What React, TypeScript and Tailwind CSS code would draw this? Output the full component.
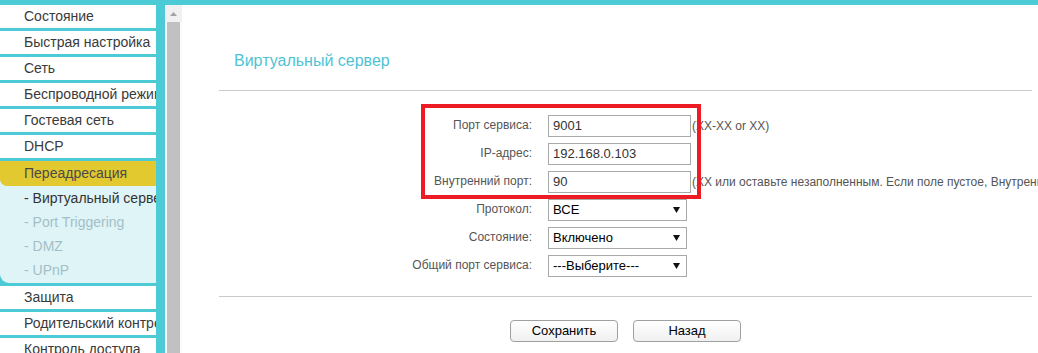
import React from "react";

const menuTop = ["Состояние", "Быстрая настройка", "Сеть", "Беспроводной режим", "Гостевая сеть", "DHCP"];
const subMenu = [
  { label: "- Виртуальный сервер", active: true },
  { label: "- Port Triggering", active: false },
  { label: "- DMZ", active: false },
  { label: "- UPnP", active: false },
];
const menuBottom = ["Защита", "Родительский контроль", "Контроль доступа"];

function Arrow() {
  return (
    <svg width="7" height="6" viewBox="0 0 7 6" className="shrink-0">
      <path d="M0 0 H7 L3.5 6 Z" fill="#111" />
    </svg>
  );
}

function Select({ value }: { value: string }) {
  return (
    <div className="w-[139px] h-[22px] border border-[#a9a9a9] bg-white flex items-center justify-between pl-[4px] pr-[6px] text-[13px] text-black">
      <span>{value}</span>
      <Arrow />
    </div>
  );
}

function Input({ value }: { value: string }) {
  return (
    <div className="w-[143px] h-[22px] border border-[#a9a9a9] bg-white flex items-center pl-[4px] text-[13px] text-[#333]">
      {value}
    </div>
  );
}

export default function App() {
  const rows = [
    { label: "Порт сервиса:", field: <Input value="9001" />, hint: "(XX-XX or XX)" },
    { label: "IP-адрес:", field: <Input value="192.168.0.103" />, hint: "" },
    {
      label: "Внутренний порт:",
      field: <Input value="90" />,
      hint: "(XX или оставьте незаполненным. Если поле пустое, Внутренний порт будет таким же, как Порт сервиса.)",
    },
    { label: "Протокол:", field: <Select value="ВСЕ" />, hint: "" },
    { label: "Состояние:", field: <Select value="Включено" />, hint: "" },
    { label: "Общий порт сервиса:", field: <Select value="---Выберите---" />, hint: "" },
  ];

  return (
    <div className="relative w-[1038px] h-[353px] overflow-hidden bg-white font-['Liberation_Sans',Arial,sans-serif]">
      {/* top bar */}
      <div className="h-[5px] bg-[#4ccbd6]" />

      <div className="flex h-[348px]">
        {/* sidebar menu */}
        <div className="w-[165px] shrink-0 bg-[#4ccbd6] pr-[9px] text-[14px] text-[#3a3a3a]">
          {menuTop.map((m) => (
            <div key={m} className="h-[23px] mb-[3px] bg-white pl-[24px] flex items-center whitespace-nowrap overflow-hidden">
              {m}
            </div>
          ))}
          <div className="bg-[#dff4f7] rounded-bl-[9px] mb-[3px] overflow-hidden">
            <div className="h-[25px] bg-[#e2c930] rounded-bl-[7px] pl-[24px] flex items-center text-[#4a4a4a]">
              Переадресация
            </div>
            <div className="pb-[1px]">
              {subMenu.map((s) => (
                <div
                  key={s.label}
                  className={`h-[24px] pl-[24px] flex items-center whitespace-nowrap overflow-hidden ${
                    s.active ? "text-[#333]" : "text-[#a3bfc5]"
                  }`}
                >
                  {s.label}
                </div>
              ))}
            </div>
          </div>
          {menuBottom.map((m) => (
            <div key={m} className="h-[23px] mb-[3px] bg-white pl-[24px] flex items-center whitespace-nowrap overflow-hidden">
              {m}
            </div>
          ))}
        </div>

        {/* scrollbar */}
        <div className="w-[17px] shrink-0 flex flex-col bg-[#fafafa]">
          <div className="h-[17px] bg-[#f1f1f1] flex items-center justify-center">
            <svg width="7" height="4" viewBox="0 0 7 4">
              <path d="M0 4 L3.5 0 L7 4 Z" fill="#a3a3a3" />
            </svg>
          </div>
          <div className="flex-1 ml-[2px] mr-[2px] bg-[#c1c1c1]" />
        </div>

        {/* main */}
        <div className="flex-1 min-w-0 pl-[37px] pr-[6px]">
          <div className="mt-[47px] pl-[15px] text-[16px] leading-[18px] text-[#4fc3d4]">Виртуальный сервер</div>
          <div className="mt-[20px] h-px bg-[#cacaca]" />

          <div className="mt-[24px] flex flex-col gap-[6px]">
            {rows.map((r) => (
              <div key={r.label} className="flex items-center h-[22px] min-w-0">
                <div className="w-[313px] shrink-0 text-right text-[12px] text-[#555] pb-[3px]">{r.label}</div>
                <div className="ml-[16px] shrink-0">{r.field}</div>
                {r.hint && (
                  <div className="ml-px shrink-0 text-[12px] text-[#555] whitespace-nowrap">{r.hint}</div>
                )}
              </div>
            ))}
          </div>

          <div className="mt-[19px] h-px bg-[#cacaca]" />

          <div className="mt-[23px] flex justify-center gap-[15px]">
            <button className="w-[108px] h-[22px] rounded-[4px] border border-[#a0a0a0] bg-gradient-to-b from-white to-[#f0f0f0] text-[13px] text-black">
              Сохранить
            </button>
            <button className="w-[108px] h-[22px] rounded-[4px] border border-[#a0a0a0] bg-gradient-to-b from-white to-[#f0f0f0] text-[13px] text-black">
              Назад
            </button>
          </div>
        </div>
      </div>

      {/* red highlight annotation */}
      <div className="absolute left-[421px] top-[104px] w-[280px] h-[95px] border-[4px] border-[#ed1c24] pointer-events-none" />
    </div>
  );
}
